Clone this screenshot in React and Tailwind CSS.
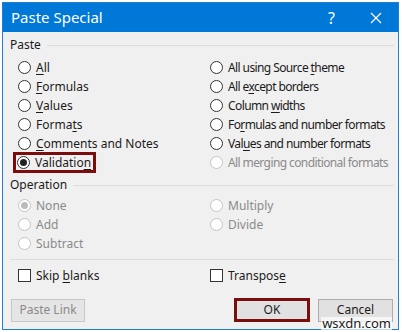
import React from 'react';

const font = { fontFamily: '"Noto Sans", "Open Sans", sans-serif' };

const Radio = ({ checked, disabled }) => (
    <span
        className={`w-[13px] h-[13px] rounded-full border bg-white flex items-center justify-center shrink-0 ${
            disabled ? 'border-[#c4c4c4]' : 'border-[#333333]'
        }`}
    >
        {checked && (
            <span className={`w-[7px] h-[7px] rounded-full ${disabled ? 'bg-[#bcbcbc]' : 'bg-[#222]'}`} />
        )}
    </span>
);

// texto con la letra de acceso subrayada
const Label = ({ text, u }) => {
    if (u === undefined) return <span>{text}</span>;
    return (
        <span>
            {text.slice(0, u)}
            <span className="underline underline-offset-2">{text[u]}</span>
            {text.slice(u + 1)}
        </span>
    );
};

const Option = ({ text, u, checked, disabled, boxed, tight }) => (
    <div className="h-[19px] flex items-center">
        <div
            className={`flex items-center gap-[5px] h-[21px] whitespace-nowrap ${
                boxed ? 'border-[3px] border-[#7b0d0d] pl-[1px] pr-[2px] -ml-[5px]' : ''
            }`}
        >
            <Radio checked={checked} disabled={disabled} />
            <span
                className={`${disabled ? 'text-[#8a8a8a]' : 'text-[#1b1b1b]'} ${
                    tight ? 'tracking-[-0.6px]' : ''
                }`}
            >
                <Label text={text} u={u} />
            </span>
        </div>
    </div>
);

const Group = ({ title }) => (
    <div className="h-[16px] flex items-center">
        <span className="text-[#1b1b1b]">{title}</span>
        <div className="flex-1 h-px bg-[#dcdcdc] ml-[6px] mr-[4px]" />
    </div>
);

const Check = ({ text, u }) => (
    <div className="flex items-center gap-[5px]">
        <span className="w-[13px] h-[13px] border border-[#333] bg-white shrink-0" />
        <span className="text-[#1b1b1b]">
            <Label text={text} u={u} />
        </span>
    </div>
);

const App = () => {
    return (
        <div className="w-[402px] h-[332px] bg-white pt-[2px] pl-[2px] relative overflow-hidden" style={font}>
            <div className="w-[397px] h-[328px] border border-[#1f7fd0] bg-[#f0f0f0] flex flex-col text-[12px] leading-none">
                {/* Barra de título */}
                <div className="h-[29px] bg-[#0078d7] flex items-center text-white shrink-0">
                    <span className="pl-[8px] text-[15px]">Paste Special</span>
                    <span className="ml-auto text-[16px] mr-[35px]">?</span>
                    <svg width="12" height="12" viewBox="0 0 12 12" className="mr-[16px]">
                        <path d="M1 1 L11 11 M11 1 L1 11" stroke="white" strokeWidth="1.3" />
                    </svg>
                </div>

                <div className="flex-1 flex flex-col pl-[7px]">
                    <div className="pt-[5px]">
                        <Group title="Paste" />
                    </div>

                    <div className="grid grid-cols-[192px_1fr] mt-[5px] pl-[8px]">
                        <div className="flex flex-col">
                            <Option text="All" u={0} />
                            <Option text="Formulas" u={0} />
                            <Option text="Values" u={0} />
                            <Option text="Formats" u={5} />
                            <Option text="Comments and Notes" u={0} />
                            <Option text="Validation" u={9} checked boxed />
                        </div>
                        <div className="flex flex-col">
                            <Option text="All using Source theme" u={17} tight />
                            <Option text="All except borders" u={5} tight />
                            <Option text="Column widths" u={7} tight />
                            <Option text="Formulas and number formats" u={2} tight />
                            <Option text="Values and number formats" u={3} tight />
                            <Option text="All merging conditional formats" disabled tight />
                        </div>
                    </div>

                    <div className="mt-[5px]">
                        <Group title="Operation" />
                    </div>

                    <div className="grid grid-cols-[192px_1fr] mt-[3px] pl-[8px]">
                        <div className="flex flex-col">
                            <Option text="None" checked disabled />
                            <Option text="Add" disabled />
                            <Option text="Subtract" disabled />
                        </div>
                        <div className="flex flex-col">
                            <Option text="Multiply" disabled />
                            <Option text="Divide" disabled />
                        </div>
                    </div>

                    <div className="h-px bg-[#dcdcdc] mt-[6px] mr-[4px]" />

                    <div className="grid grid-cols-[192px_1fr] mt-[9px] pl-[8px]">
                        <Check text="Skip blanks" u={5} />
                        <Check text="Transpose" u={8} />
                    </div>

                    {/* Botones */}
                    <div className="flex items-center mt-[16px] pl-[1px] pr-[5px]">
                        <button className="w-[74px] h-[23px] border border-[#c8c8c8] bg-[#e5e5e5] text-[#8a8a8a] text-[12px]">
                            Paste Link
                        </button>
                        <button className="ml-auto w-[76px] h-[24px] border-[3px] border-[#7b0d0d] bg-[#e1e1e1] text-[#1b1b1b] text-[12px]">
                            OK
                        </button>
                        <button className="ml-[8px] w-[75px] h-[23px] border border-[#adadad] bg-[#e1e1e1] text-[#1b1b1b] text-[12px]">
                            Cancel
                        </button>
                    </div>
                </div>
            </div>

            {/* marca de agua */}
            <span className="absolute right-[10px] bottom-[2px] text-[13px] leading-none text-[#222] bg-white/70 px-[1px]">
                wsxdn.com
            </span>
        </div>
    );
};

export default App;
